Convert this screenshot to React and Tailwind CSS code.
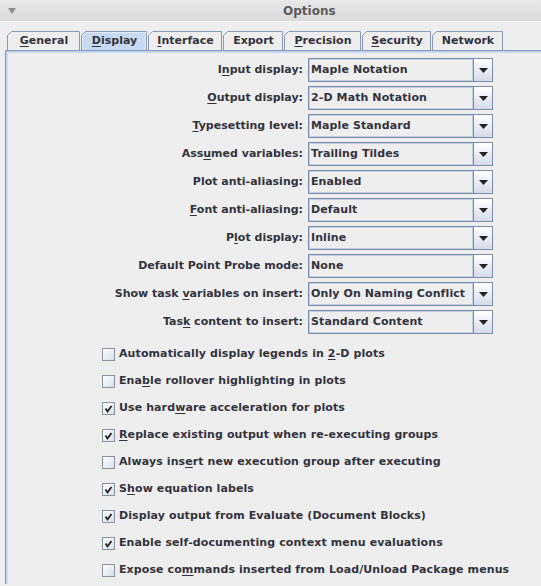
import React from 'react';

const tabs = [
  { pre: '', u: 'G', post: 'eneral', w: 74 },
  { pre: '', u: 'D', post: 'isplay', w: 67, selected: true },
  { pre: '', u: 'I', post: 'nterface', w: 75 },
  { pre: 'Export', u: '', post: '', w: 61 },
  { pre: '', u: 'P', post: 'recision', w: 78 },
  { pre: '', u: 'S', post: 'ecurity', w: 70 },
  { pre: 'Network', u: '', post: '', w: 72 },
];

const rows = [
  { label: ['I', 'n', 'put display:'], value: 'Maple Notation' },
  { label: ['', 'O', 'utput display:'], value: '2-D Math Notation' },
  { label: ['', 'T', 'ypesetting level:'], value: 'Maple Standard' },
  { label: ['Ass', 'u', 'med variables:'], value: 'Trailing Tildes' },
  { label: ['Plot anti-aliasing:', '', ''], value: 'Enabled' },
  { label: ['', 'F', 'ont anti-aliasing:'], value: 'Default' },
  { label: ['P', 'l', 'ot display:'], value: 'Inline' },
  { label: ['Default Point Probe mode:', '', ''], value: 'None' },
  { label: ['Show task ', 'v', 'ariables on insert:'], value: 'Only On Naming Conflict' },
  { label: ['Tas', 'k', ' content to insert:'], value: 'Standard Content' },
];

const checks = [
  { label: ['Automatically display legends in ', '2', '-D plots'], on: false },
  { label: ['Ena', 'b', 'le rollover highlighting in plots'], on: false },
  { label: ['Use hard', 'w', 'are acceleration for plots'], on: true },
  { label: ['', 'R', 'eplace existing output when re-executing groups'], on: true },
  { label: ['Always ins', 'e', 'rt new execution group after executing'], on: false },
  { label: ['S', 'h', 'ow equation labels'], on: true },
  { label: ['Display output from Evaluate (Document Blocks)', '', ''], on: true },
  { label: ['Enable self-documenting context menu evaluations', '', ''], on: true },
  { label: ['Expose co', 'm', 'mands inserted from Load/Unload Package menus'], on: false },
];

const Mnemonic = ({ parts }) => (
  <>
    {parts[0]}
    {parts[1] && <u className="underline-offset-2">{parts[1]}</u>}
    {parts[2]}
  </>
);

const Tab = ({ tab }) => {
  const h = 19;
  const w = tab.w - 1;
  return (
    <div className="relative h-[19px] shrink-0" style={{ width: tab.w }}>
      <svg className="absolute inset-0" width={tab.w} height={h}>
        <path
          d={`M0.5 ${h} V4.5 L4.5 0.5 H${w - 0.5} V${h}`}
          fill={tab.selected ? '#c7daf2' : '#eeeeee'}
          stroke="#8a9ab6"
          strokeWidth="1"
        />
        {tab.selected && (
          <path d={`M1.5 ${h} V5 L5 1.5 H${w - 1.5} V${h}`} fill="none" stroke="#e3edf9" strokeWidth="1" />
        )}
      </svg>
      <div className="relative flex h-full items-center justify-center pt-[1px]">
        <Mnemonic parts={[tab.pre, tab.u, tab.post]} />
      </div>
    </div>
  );
};

const Combo = ({ value }) => (
  <div className="flex h-[24px] w-[185px] border border-[#7a8bab]">
    <div className="flex flex-1 items-center border border-[#c3d1e4] pl-[1px] tracking-[0.1px] whitespace-nowrap overflow-hidden">
      {value}
    </div>
    <div className="flex w-[19px] items-center justify-center border-l border-[#7a8bab] bg-gradient-to-b from-[#ffffff] to-[#d3dde9]">
      <svg width="9" height="5" viewBox="0 0 9 5">
        <path d="M0 0 H9 L4.5 5 Z" fill="#222" />
      </svg>
    </div>
  </div>
);

const CheckBox = ({ on }) => (
  <div className="flex h-[13px] w-[13px] items-center justify-center border border-[#8a929e] bg-gradient-to-br from-[#ffffff] to-[#d6e0ec]">
    {on && (
      <svg width="11" height="11" viewBox="0 0 11 11">
        <path d="M2.5 5.5 L4.5 8.5 L8.5 3" fill="none" stroke="#222" strokeWidth="1.8" />
      </svg>
    )}
  </div>
);

export default function App() {
  return (
    <div className="h-[586px] w-[541px] overflow-hidden bg-[#eeeeee] font-['DejaVu_Sans',sans-serif] text-[11px] font-bold text-[#33333d]">
      {/* Title bar */}
      <div className="relative flex h-[22px] items-center border-b border-[#f6f6f6] bg-gradient-to-b from-[#e9e9e9] to-[#d9d9d9]">
        <svg className="ml-[8px]" width="8" height="6" viewBox="0 0 8 6">
          <path d="M0 0 H8 L4 6 Z" fill="#8e8e8e" />
        </svg>
        <div className="ml-[267px] text-[12px] text-[#5b5b5b]">Options</div>
      </div>

      {/* Tabs */}
      <div className="flex pl-[7px] pt-[9px]">
        {tabs.map((t, i) => (
          <Tab key={i} tab={t} />
        ))}
      </div>

      {/* Panel */}
      <div className="ml-[5px] border-l border-t border-[#8297b9]">
        <div className="border-l-2 border-t-2 border-[#c6d8ef] pt-[5px]">
          <div className="flex flex-col gap-[4px]">
            {rows.map((r, i) => (
              <div key={i} className="flex items-center">
                <div className="w-[296px] pr-[1px] text-right whitespace-nowrap">
                  <Mnemonic parts={r.label} />
                </div>
                <div className="ml-[4px]">
                  <Combo value={r.value} />
                </div>
              </div>
            ))}
          </div>

          <div className="mt-[7px] flex flex-col tracking-[0.1px]">
            {checks.map((c, i) => (
              <div key={i} className="flex h-[27px] items-center pl-[94px]">
                <CheckBox on={c.on} />
                <div className="ml-[4px] whitespace-nowrap">
                  <Mnemonic parts={c.label} />
                </div>
              </div>
            ))}
          </div>
        </div>
      </div>
    </div>
  );
}
